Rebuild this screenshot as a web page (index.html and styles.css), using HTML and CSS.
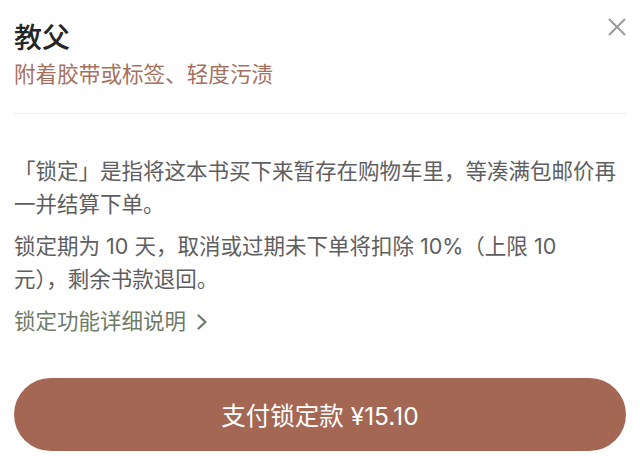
FILE: index.html
```html
<!DOCTYPE html>
<html lang="zh-CN">
<head>
    <meta charset="UTF-8">
    <meta name="viewport" content="width=device-width, initial-scale=1.0">
    <title>锁定</title>
    <link rel="stylesheet" href="styles.css">
</head>
<body>
    <div class="sheet">
        <div class="sheet-header">
            <div class="book">
                <h1 class="book-title">教父</h1>
                <p class="book-condition">附着胶带或标签、轻度污渍</p>
            </div>
            <button class="close-btn" aria-label="关闭">
                <svg width="18" height="18" viewBox="0 0 18 18">
                    <path d="M1.5 1.5 L16.5 16.5 M16.5 1.5 L1.5 16.5" stroke="#9b9b9b" stroke-width="2" stroke-linecap="round" fill="none"/>
                </svg>
            </button>
        </div>

        <div class="divider"></div>

        <div class="lock-info">
            <p>「锁定」是指将这本书买下来暂存在购物车里，等凑满包邮价再一并结算下单。</p>
            <p>锁定期为 10 天，取消或过期未下单将扣除 10%（上限 10<br>元），剩余书款退回。</p>
            <a class="lock-link" href="#">锁定功能详细说明
                <svg width="10" height="16" viewBox="0 0 10 16">
                    <polyline points="1.5,1.5 8.5,8 1.5,14.5" stroke="#6e7a66" stroke-width="2.2" fill="none" stroke-linecap="round" stroke-linejoin="round"/>
                </svg>
            </a>
        </div>

        <button class="pay-btn">支付锁定款 ¥15.10</button>
    </div>
</body>
</html>
```

FILE: styles.css
```css
body {
    margin: 0;
    background-color: #fff;
    font-family: Inter, "Noto Sans CJK SC", sans-serif;
}
.sheet {
    padding: 18px 14px 0;
}
.sheet-header {
    display: flex;
    justify-content: space-between;
    align-items: flex-start;
}
.book-title {
    margin: 0;
    font-size: 28px;
    font-weight: 500;
    line-height: 40px;
    color: #262626;
}
.book-condition {
    margin: 0;
    font-size: 21.6px;
    line-height: 32px;
    color: #a6705e;
}
.close-btn {
    border: none;
    background: none;
    padding: 0;
    display: flex;
}
.divider {
    height: 1px;
    background-color: #ededed;
    margin-top: 23px;
}
.lock-info {
    margin-top: 41px;
    font-size: 21.5px;
    line-height: 33px;
    color: #5e5e5e;
}
.lock-info p {
    margin: 0 0 9px;
}
.lock-link {
    display: flex;
    align-items: center;
    gap: 11px;
    color: #6e7a66;
    text-decoration: none;
}
.pay-btn {
    display: block;
    width: 100%;
    height: 73px;
    margin-top: 40px;
    border: none;
    border-radius: 37px;
    background-color: #a36753;
    color: #fff;
    font-family: Inter, "Noto Sans CJK SC", sans-serif;
    font-size: 24.5px;
}
```
